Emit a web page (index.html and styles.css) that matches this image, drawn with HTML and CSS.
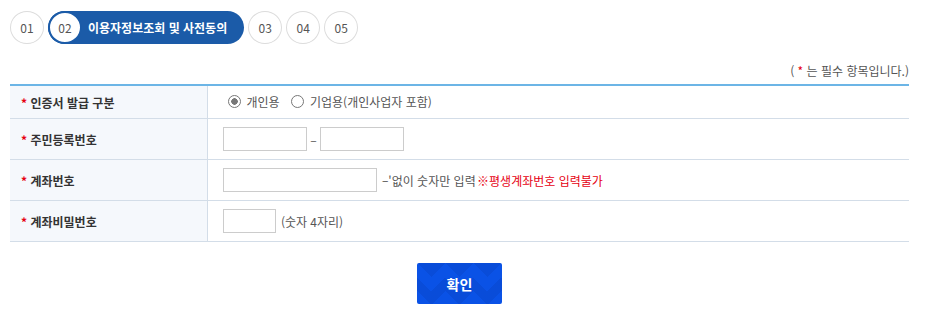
FILE: index.html
```html
<!DOCTYPE html>
<html lang="ko">
<head>
  <meta charset="UTF-8" />
  <title>이용자정보조회 및 사전동의</title>
  <link rel="stylesheet" href="styles.css">
</head>
<body>
  <div class="wrap">

    <!-- 단계 -->
    <ol class="steps">
      <li class="step">01</li>
      <li class="step-on">
        <span class="step step-cur">02</span>
        <span class="step-name">이용자정보조회 및 사전동의</span>
      </li>
      <li class="step">03</li>
      <li class="step">04</li>
      <li class="step">05</li>
    </ol>

    <p class="req-note">( <em>*</em> 는 필수 항목입니다.)</p>

    <table class="form-table">
      <tr class="row-first">
        <th><em>*</em> 인증서 발급 구분</th>
        <td>
          <label class="radio"><input type="radio" name="kind" checked>개인용</label>
          <label class="radio"><input type="radio" name="kind">기업용(개인사업자 포함)</label>
        </td>
      </tr>
      <tr>
        <th><em>*</em> 주민등록번호</th>
        <td>
          <input class="inp inp-md" type="text">
          <span class="dash">–</span>
          <input class="inp inp-md" type="password">
        </td>
      </tr>
      <tr>
        <th><em>*</em> 계좌번호</th>
        <td>
          <input class="inp inp-lg" type="text">
          <span class="hint">–'없이 숫자만 입력</span>
          <span class="warn">※평생계좌번호 입력불가</span>
        </td>
      </tr>
      <tr>
        <th><em>*</em> 계좌비밀번호</th>
        <td>
          <input class="inp inp-sm" type="password">
          <span class="hint">(숫자 4자리)</span>
        </td>
      </tr>
    </table>

    <div class="btn-area">
      <button class="btn-ok" type="button">확인</button>
    </div>
  </div>
</body>
</html>
```

FILE: styles.css
```css
body {
  margin: 0;
  font-family: "Noto Sans CJK KR", "Noto Sans", sans-serif;
  color: #555;
  background: #fff;
}

.wrap {
  width: 899px;
  margin-left: 10px;
}

.steps {
  list-style: none;
  margin: 11px 0 0;
  padding: 0;
  display: flex;
  align-items: center;
  gap: 4px;
}

.step {
  width: 34px;
  height: 33px;
  box-sizing: border-box;
  border: 1px solid #dcdcdc;
  border-radius: 50%;
  display: flex;
  align-items: center;
  justify-content: center;
  font-size: 12px;
  color: #555;
  background: #fff;
}

.step-on {
  display: flex;
  align-items: center;
  height: 33px;
  padding-right: 17px;
  background: #1b5ba8;
  border-radius: 17px;
}

.step-cur {
  border: 2px solid #1b5ba8;
}

.step-name {
  margin-left: 6px;
  color: #fff;
  font-size: 12px;
  font-weight: bold;
}

.req-note {
  margin: 19px 0 5px;
  text-align: right;
  font-size: 12px;
  line-height: 16px;
  color: #555;
}

em {
  font-style: normal;
  color: #e60012;
}

.form-table {
  width: 100%;
  border-collapse: collapse;
  border-top: 2px solid #6cb5e6;
  font-size: 12px;
}

.form-table th {
  width: 197px;
  box-sizing: border-box;
  padding: 0 0 0 11px;
  height: 40px;
  text-align: left;
  font-weight: bold;
  color: #333;
  background: #f5f8fc;
  border-bottom: 1px solid #d3dde8;
  border-right: 1px solid #d3dde8;
}

.form-table td {
  padding: 0 0 0 15px;
  height: 40px;
  border-bottom: 1px solid #d3dde8;
  color: #555;
}

.row-first th,
.row-first td {
  height: 32px;
}

.radio {
  display: inline-flex;
  align-items: center;
  margin-left: 5px;
  margin-right: 3px;
}

.radio input {
  appearance: none;
  width: 13px;
  height: 13px;
  margin: 0 6px 0 0;
  border: 1px solid #777;
  border-radius: 50%;
  box-sizing: border-box;
  background: #fff;
}

.radio input:checked {
  background: radial-gradient(circle, #777 0 3px, #fff 3.5px);
}

.inp {
  height: 24px;
  box-sizing: border-box;
  border: 1px solid #ccc;
  vertical-align: middle;
  padding: 0 4px;
  margin: 0;
}

.inp-md { width: 84px; }
.inp-lg { width: 154px; }
.inp-sm { width: 53px; }

.dash {
  margin: 0 1px;
  vertical-align: middle;
}

.hint {
  margin-left: 2px;
  vertical-align: middle;
}

.warn {
  margin-left: -2px;
  color: #e60012;
  vertical-align: middle;
}

.btn-area {
  display: flex;
  justify-content: center;
  margin-top: 21px;
}

.btn-ok {
  width: 85px;
  height: 41px;
  border: 0;
  border-radius: 2px;
  color: #fff;
  font-family: inherit;
  font-size: 14px;
  font-weight: bold;
  background-color: #0a52e6;
  background-image:
    linear-gradient(135deg, rgba(0, 0, 60, 0.08) 25%, transparent 25%),
    linear-gradient(225deg, rgba(0, 0, 60, 0.08) 25%, transparent 25%),
    linear-gradient(45deg, rgba(0, 0, 60, 0.08) 25%, transparent 25%),
    linear-gradient(315deg, rgba(0, 0, 60, 0.08) 25%, transparent 25%);
  background-size: 28px 28px;
  background-position: 14px 0, 14px 0, 0 0, 0 0;
}
```
